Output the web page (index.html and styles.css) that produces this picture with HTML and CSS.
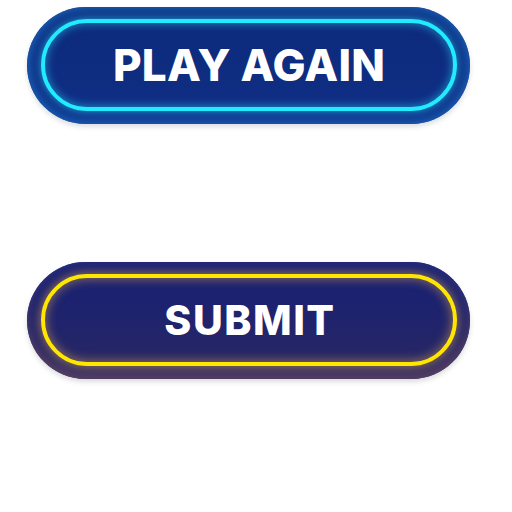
FILE: index.html
```html
<!DOCTYPE html>
<html>
<head>
<meta charset="utf-8">
<link rel="stylesheet" href="styles.css">
</head>
<body>
<div class="stack">
  <div class="btn btn-blue">
    <div class="ring ring-cyan"><span class="label label-lg">PLAY AGAIN</span></div>
  </div>
  <div class="btn btn-navy">
    <div class="ring ring-yellow"><span class="label label-md">SUBMIT</span></div>
  </div>
</div>
</body>
</html>
```
FILE: styles.css
```css
html, body {
  margin: 0;
  padding: 0;
  background: #ffffff;
  width: 512px;
  height: 512px;
  overflow: hidden;
}
.stack {
  display: flex;
  flex-direction: column;
  gap: 138px;
  padding: 7px 0 0 27px;
}
.btn {
  box-sizing: border-box;
  width: 443px;
  height: 117px;
  border-radius: 59px;
  padding: 12px 13px 13px 14px;
  display: flex;
}
.btn-blue {
  background: linear-gradient(#0d2a7a, #0f2f86);
  box-shadow: inset 0 0 12px 3px #1a63b8, 0 3px 5px rgba(60, 70, 90, 0.18);
}
.btn-navy {
  background: linear-gradient(#1c2270 30%, #2a2862);
  box-shadow: inset 0 -5px 10px 0 #5a4262, inset 0 3px 6px 0 #1e2a80, 0 3px 5px rgba(60, 60, 70, 0.18);
}
.ring {
  flex: 1;
  border-radius: 50px;
  display: flex;
  align-items: center;
  justify-content: center;
}
.ring-cyan {
  border: 4px solid #22eaff;
  box-shadow: 0 0 7px 1px rgba(40, 220, 255, 0.55), inset 0 0 9px 1px rgba(40, 220, 255, 0.5);
}
.ring-yellow {
  border: 4px solid #ffe600;
  box-shadow: 0 0 10px 2px rgba(230, 170, 80, 0.5), inset 0 0 10px 2px rgba(230, 170, 80, 0.45);
}
.label {
  font-family: Inter, "Liberation Sans", sans-serif;
  font-weight: 800;
  color: #ffffff;
  line-height: 1;
}
.label-lg {
  font-size: 44px;
  letter-spacing: 0.2px;
}
.label-md {
  font-size: 41px;
  letter-spacing: 1.5px;
  padding-left: 2px;
}
```
